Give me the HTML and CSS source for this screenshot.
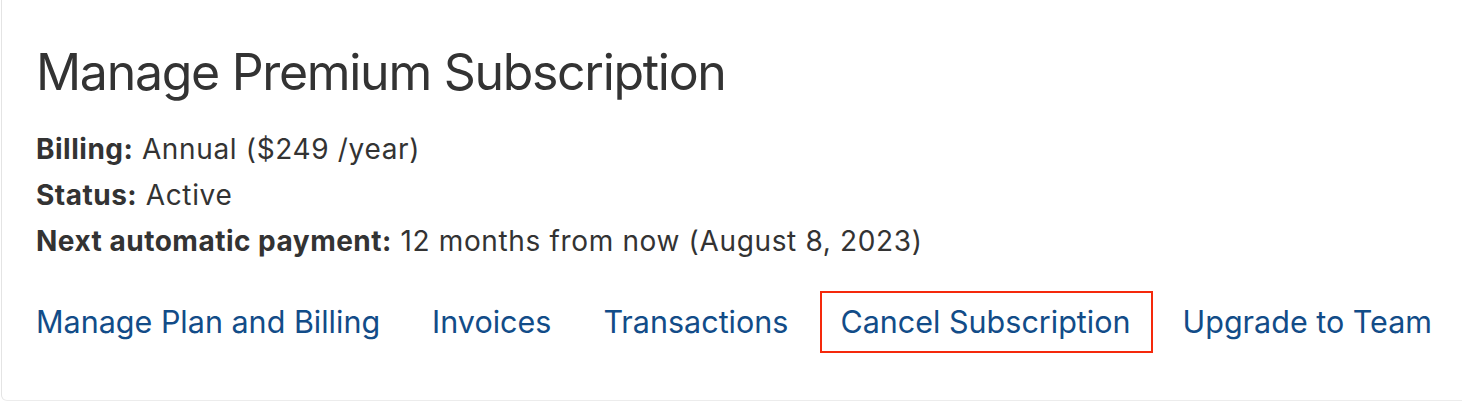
FILE: index.html
```html
<!DOCTYPE html>
<html>
<head>
<meta charset="utf-8">
<link rel="stylesheet" href="styles.css">
</head>
<body>
<div class="card">
  <h1 class="title">Manage Premium Subscription</h1>
  <div class="info">
    <p class="row"><b>Billing:</b> Annual ($249 /year)</p>
    <p class="row"><b>Status:</b> Active</p>
    <p class="row"><b>Next automatic payment:</b> 12 months from now (August 8, 2023)</p>
  </div>
  <nav class="links">
    <a class="link" href="#">Manage Plan and Billing</a>
    <a class="link" href="#">Invoices</a>
    <a class="link" href="#">Transactions</a>
    <a class="link highlighted" href="#">Cancel Subscription</a>
    <a class="link" href="#">Upgrade to Team</a>
  </nav>
</div>
</body>
</html>
```
FILE: styles.css
```css
html, body {
  margin: 0;
  padding: 0;
  background: #ffffff;
}
body {
  font-family: Inter, "Noto Sans", sans-serif;
  color: #333333;
  overflow: hidden;
}
.card {
  box-sizing: border-box;
  margin-left: 1px;
  height: 401px;
  border-left: 1px solid #e4e4e4;
  border-bottom: 1px solid #ececec;
  border-radius: 0 0 0 6px;
  padding: 42px 0 0 34px;
}
.title {
  margin: 0;
  font-size: 50px;
  font-weight: 400;
  line-height: 60px;
  letter-spacing: -1.3px;
  color: #333333;
}
.info {
  margin-top: 24px;
}
.row {
  margin: 0;
  font-size: 28px;
  line-height: 46px;
  letter-spacing: 0.65px;
}
.row b {
  font-weight: 700;
  letter-spacing: 0.5px;
}
.links {
  display: flex;
  gap: 52px;
  margin-top: 29px;
}
.link {
  font-size: 30.5px;
  line-height: 58px;
  color: #124c88;
  text-decoration: none;
}
.highlighted {
  outline: 2px solid #f5290c;
  padding: 0 20px 0 18px;
  margin: 0 -20px 0 -18px;
}
```
